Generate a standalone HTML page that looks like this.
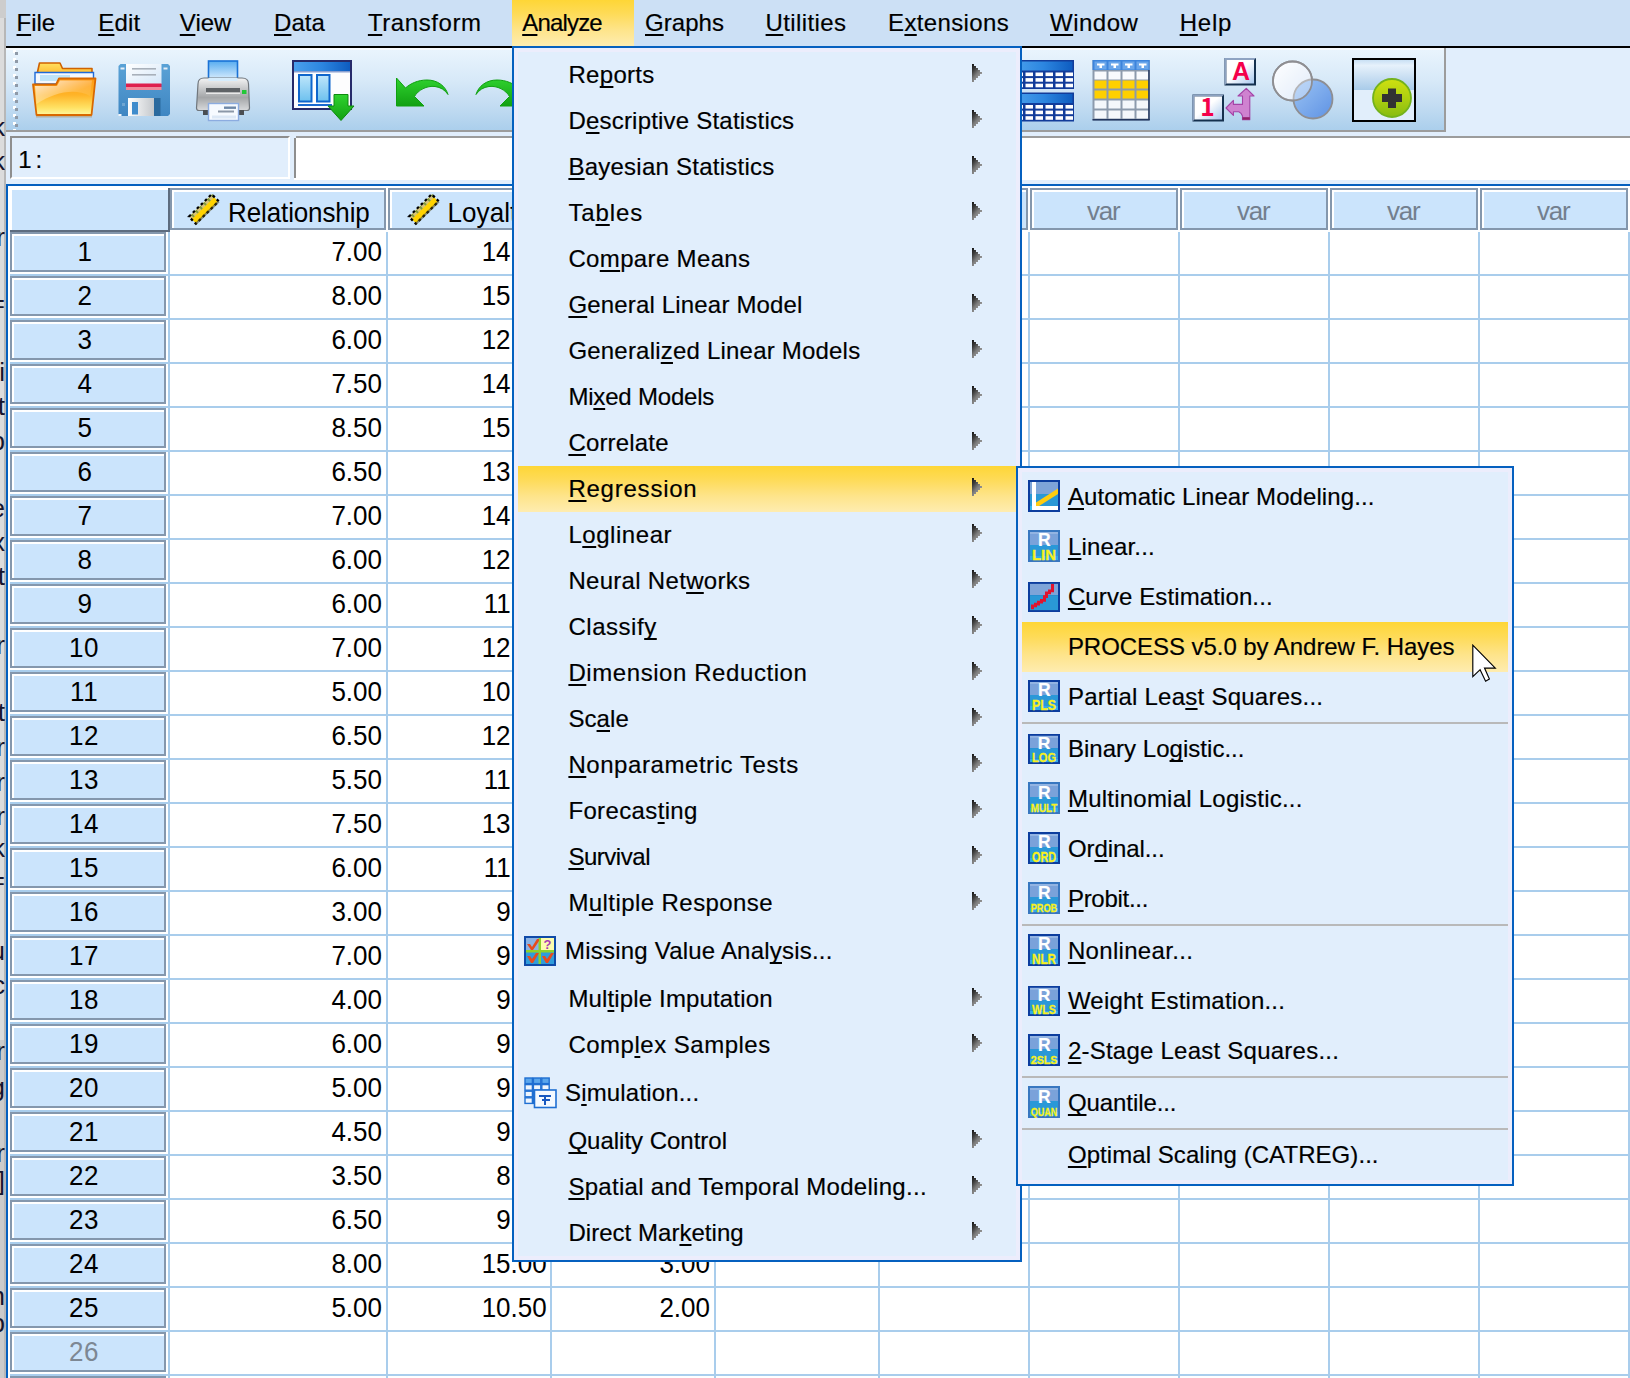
<!DOCTYPE html>
<html><head><meta charset="utf-8"><title>SPSS Analyze Regression PROCESS</title>
<style>
html,body{margin:0;padding:0}
body{width:1630px;height:1378px;overflow:hidden;position:relative;background:#fff;font-family:"Liberation Sans",sans-serif;}
.a{position:absolute}
.t{position:absolute;white-space:pre;font-family:"Liberation Sans",sans-serif;-webkit-text-stroke:0.18px currentColor}
.t u{text-decoration:underline;text-decoration-thickness:2px;text-underline-offset:3px;text-decoration-skip-ink:none}
.rh{position:absolute;left:10px;width:152px;height:36px;border:2px solid #8497ad;background:#cbe4fc;box-shadow:inset 2px 2px 0 #fff}
.ch{position:absolute;top:188px;height:38px;border:2px solid #8497ad;background:#cbe4fc;box-shadow:inset 2px 2px 0 #fff}
.hl{position:absolute;height:2px;background:#a9cdec;left:10px;right:0}
.vl{position:absolute;width:2px;background:#a9cdec;top:232px;bottom:0}
.sep{position:absolute;left:5px;width:486px;height:2px;background:#b9b9b9}
.arr{position:absolute;left:459px;width:10px;height:18px}
</style></head><body>

<div class="a" style="left:0;top:0;width:6px;height:1378px;background:linear-gradient(90deg,#dcdcdc 0,#dcdcdc 4px,#b7b7b7 4px,#b7b7b7 6px)"></div>
<div class="a" style="left:0;top:0;width:6px;height:18px;background:#cdcdcd"></div>
<div class="a" style="left:0;top:1040px;width:4px;height:338px;background:#cbcbcb"></div>
<div class="a" style="left:0;top:0;width:5px;height:1378px;overflow:hidden"><span style="position:absolute;right:0;top:112px;font-size:26px;line-height:30px;color:#15152e;white-space:pre">k</span><span style="position:absolute;right:0;top:146px;font-size:26px;line-height:30px;color:#15152e;white-space:pre">k</span><span style="position:absolute;right:0;top:222px;font-size:26px;line-height:30px;color:#15152e;white-space:pre">r</span><span style="position:absolute;right:0;top:288px;font-size:26px;line-height:30px;color:#15152e;white-space:pre">=</span><span style="position:absolute;right:0;top:357px;font-size:26px;line-height:30px;color:#15152e;white-space:pre">i</span><span style="position:absolute;right:0;top:391px;font-size:26px;line-height:30px;color:#15152e;white-space:pre">t</span><span style="position:absolute;right:0;top:426px;font-size:26px;line-height:30px;color:#15152e;white-space:pre">b</span><span style="position:absolute;right:0;top:493px;font-size:26px;line-height:30px;color:#15152e;white-space:pre">e</span><span style="position:absolute;right:0;top:527px;font-size:26px;line-height:30px;color:#15152e;white-space:pre">x</span><span style="position:absolute;right:0;top:561px;font-size:26px;line-height:30px;color:#15152e;white-space:pre">t</span><span style="position:absolute;right:0;top:630px;font-size:26px;line-height:30px;color:#15152e;white-space:pre">r</span><span style="position:absolute;right:0;top:697px;font-size:26px;line-height:30px;color:#15152e;white-space:pre">t</span><span style="position:absolute;right:0;top:732px;font-size:26px;line-height:30px;color:#15152e;white-space:pre">r</span><span style="position:absolute;right:0;top:767px;font-size:26px;line-height:30px;color:#15152e;white-space:pre">r</span><span style="position:absolute;right:0;top:801px;font-size:26px;line-height:30px;color:#15152e;white-space:pre">r</span><span style="position:absolute;right:0;top:833px;font-size:26px;line-height:30px;color:#15152e;white-space:pre">k</span><span style="position:absolute;right:0;top:865px;font-size:26px;line-height:30px;color:#15152e;white-space:pre">=</span><span style="position:absolute;right:0;top:936px;font-size:26px;line-height:30px;color:#15152e;white-space:pre">u</span><span style="position:absolute;right:0;top:970px;font-size:26px;line-height:30px;color:#15152e;white-space:pre">c</span><span style="position:absolute;right:0;top:1036px;font-size:26px;line-height:30px;color:#15152e;white-space:pre">r</span><span style="position:absolute;right:0;top:1072px;font-size:26px;line-height:30px;color:#15152e;white-space:pre">g</span><span style="position:absolute;right:0;top:1138px;font-size:26px;line-height:30px;color:#15152e;white-space:pre">r</span><span style="position:absolute;right:0;top:1166px;font-size:26px;line-height:30px;color:#15152e;white-space:pre">]</span><span style="position:absolute;right:0;top:1281px;font-size:26px;line-height:30px;color:#15152e;white-space:pre">h</span><span style="position:absolute;right:0;top:1308px;font-size:26px;line-height:30px;color:#15152e;white-space:pre">b</span></div>
<div class="a" style="left:6px;top:0;width:1624px;height:46px;background:#cce0f5"></div>
<div class="a" style="left:512px;top:0;width:122px;height:46px;background:linear-gradient(180deg,#fed636 0%,#fedb58 30%,#fee48a 65%,#feecb0 100%)"></div>
<div class="a" style="left:6px;top:46px;width:1624px;height:2px;background:#000"></div>
<span class="t " style="left:16.50px;top:9px;font-size:24px;line-height:27px;letter-spacing:-0.042px;color:#000;"><u>F</u>ile</span>
<span class="t " style="left:98.20px;top:9px;font-size:24px;line-height:27px;letter-spacing:0.208px;color:#000;"><u>E</u>dit</span>
<span class="t " style="left:179.80px;top:9px;font-size:24px;line-height:27px;letter-spacing:0.017px;color:#000;"><u>V</u>iew</span>
<span class="t " style="left:274.00px;top:9px;font-size:24px;line-height:27px;letter-spacing:0.083px;color:#000;"><u>D</u>ata</span>
<span class="t " style="left:367.90px;top:9px;font-size:24px;line-height:27px;letter-spacing:0.575px;color:#000;"><u>T</u>ransform</span>
<span class="t " style="left:522.20px;top:9px;font-size:24px;line-height:27px;letter-spacing:-0.812px;color:#000;"><u>A</u>nalyze</span>
<span class="t " style="left:645.00px;top:9px;font-size:24px;line-height:27px;letter-spacing:0.050px;color:#000;"><u>G</u>raphs</span>
<span class="t " style="left:765.60px;top:9px;font-size:24px;line-height:27px;letter-spacing:0.378px;color:#000;"><u>U</u>tilities</span>
<span class="t " style="left:888.00px;top:9px;font-size:24px;line-height:27px;letter-spacing:0.369px;color:#000;">E<u>x</u>tensions</span>
<span class="t " style="left:1050.00px;top:9px;font-size:24px;line-height:27px;letter-spacing:0.500px;color:#000;"><u>W</u>indow</span>
<span class="t " style="left:1179.70px;top:9px;font-size:24px;line-height:27px;letter-spacing:0.808px;color:#000;"><u>H</u>elp</span>
<div class="a" style="left:6px;top:48px;width:1624px;height:136px;background:#e1eefc"></div>
<div class="a" style="left:6px;top:48px;width:1438px;height:82px;background:linear-gradient(180deg,#f6fafe 0,#f6fafe 2px,#e9f4fd 2px,#d7e9f8 40%,#c3dcf2 70%,#abcfec 100%);border-right:2px solid #9c9c9c;border-bottom:2px solid #9c9c9c"></div>
<svg class="a" style="left:0;top:48px" width="1630" height="84" viewBox="0 48 1630 84"><defs>
<linearGradient id="fBack" x1="0" y1="0" x2="0" y2="1"><stop offset="0" stop-color="#ffe060"/><stop offset="1" stop-color="#ffa818"/></linearGradient>
<linearGradient id="fFront" x1="0" y1="0" x2="0" y2="1"><stop offset="0" stop-color="#ff9a14"/><stop offset="0.45" stop-color="#ffb428"/><stop offset="0.8" stop-color="#ffe264"/><stop offset="1" stop-color="#fff7a0"/></linearGradient>
<linearGradient id="fShine" x1="0" y1="0" x2="1" y2="1"><stop offset="0" stop-color="#fff" stop-opacity="0.85"/><stop offset="0.6" stop-color="#fff" stop-opacity="0.15"/><stop offset="1" stop-color="#fff" stop-opacity="0"/></linearGradient>
<linearGradient id="flBody" x1="0" y1="0" x2="0" y2="1"><stop offset="0" stop-color="#5aa2d6"/><stop offset="1" stop-color="#3f86c2"/></linearGradient>
<linearGradient id="flLab" x1="0" y1="0" x2="1" y2="1"><stop offset="0" stop-color="#ffffff"/><stop offset="1" stop-color="#d4e6f8"/></linearGradient>
<linearGradient id="flMet" x1="0" y1="0" x2="1" y2="0"><stop offset="0" stop-color="#ffffff"/><stop offset="1" stop-color="#c4c8cc"/></linearGradient>
<linearGradient id="prPap" x1="0" y1="0" x2="0" y2="1"><stop offset="0" stop-color="#58acf0"/><stop offset="1" stop-color="#e4f2fe"/></linearGradient>
<linearGradient id="prBody" x1="0" y1="0" x2="0" y2="1"><stop offset="0" stop-color="#f4f4f4"/><stop offset="0.35" stop-color="#c4c6c8"/><stop offset="0.6" stop-color="#a4a6a8"/><stop offset="1" stop-color="#d8dadc"/></linearGradient>
<linearGradient id="hdr" x1="0" y1="0" x2="1" y2="0"><stop offset="0" stop-color="#4aa0ec"/><stop offset="0.5" stop-color="#2c86e0"/><stop offset="1" stop-color="#0e5cc0"/></linearGradient>
<linearGradient id="pan" x1="0" y1="0" x2="0" y2="1"><stop offset="0" stop-color="#bfe6fb"/><stop offset="1" stop-color="#6cc0ee"/></linearGradient>
<linearGradient id="grn" x1="0" y1="0" x2="0" y2="1"><stop offset="0" stop-color="#2fd22f"/><stop offset="1" stop-color="#12a012"/></linearGradient>
<linearGradient id="box" x1="0" y1="0" x2="1" y2="1"><stop offset="0" stop-color="#ffffff"/><stop offset="0.45" stop-color="#ffffff"/><stop offset="1" stop-color="#a8c8ee"/></linearGradient>
<linearGradient id="c1" x1="0" y1="0" x2="1" y2="1"><stop offset="0" stop-color="#ffffff"/><stop offset="1" stop-color="#cfe0f6"/></linearGradient>
<linearGradient id="c2" x1="0" y1="0" x2="1" y2="1"><stop offset="0" stop-color="#9cc4f4"/><stop offset="1" stop-color="#5e92e4"/></linearGradient>
<linearGradient id="btn" x1="0" y1="0" x2="0" y2="1"><stop offset="0" stop-color="#c9e0f4"/><stop offset="0.18" stop-color="#e6f1fb"/><stop offset="1" stop-color="#a9cbe9"/></linearGradient>
<linearGradient id="lime" x1="0" y1="0" x2="0" y2="1"><stop offset="0" stop-color="#cfe010"/><stop offset="0.5" stop-color="#aed010"/><stop offset="1" stop-color="#86bc10"/></linearGradient>
</defs><path d="M37.5 72 L39.5 63 L60 63 L62.5 68.5 L92 68.5 L92 80 L37.5 80 Z" fill="url(#fBack)" stroke="#cf6200" stroke-width="1.6" stroke-linejoin="round"/><path d="M35 72.5 L93.5 72.5 L93.5 84 L35 84 Z" fill="#f4f8fe" stroke="#1f6ad8" stroke-width="1.4"/><path d="M40 75 L70 75 L70 81 L40 81 Z" fill="#bfe4f8"/><path d="M33 84.5 L56 84.5 L59 78.5 L95.5 78.5 L91.5 115 L36.5 115 Z" fill="url(#fFront)" stroke="#d96800" stroke-width="1.8" stroke-linejoin="round"/><path d="M35 86 L57 86 L60 80.5 L92 80.5 L90 96 C75 88 55 92 36.5 104 Z" fill="url(#fShine)"/><rect x="36" y="116" width="56" height="1.5" fill="#b8966a" opacity="0.6"/><path d="M118.5 66 L120.5 64 L168 64 L170 66 L170 114 L168 116 L120.5 116 L118.5 114 Z" fill="url(#flBody)"/><rect x="126" y="64" width="35.5" height="20" fill="url(#flLab)"/><rect x="132" y="68" width="24" height="1.6" fill="#a8b0ba"/><rect x="132" y="74" width="24" height="1.6" fill="#a8b0ba"/><rect x="126" y="83.5" width="35.5" height="3.6" fill="#de1f4e"/><rect x="126" y="87" width="35.5" height="3" fill="#f08a9c"/><rect x="128" y="98" width="26" height="18" fill="url(#flMet)"/><rect x="154" y="98" width="6.5" height="18" fill="#2b6a9e"/><rect x="132" y="102" width="6" height="12.5" fill="#3f8ccc"/><rect x="120.5" y="67.5" width="4" height="2" fill="#e6eef6"/><rect x="163.5" y="67.5" width="4" height="2" fill="#e6eef6"/><rect x="122" y="103" width="3" height="3" fill="#6fa6d2"/><rect x="118.5" y="114" width="3" height="2" fill="#f2f6fa"/><rect x="208.5" y="61" width="29" height="20" fill="url(#prPap)" stroke="#1a72d6" stroke-width="1.6"/><path d="M198 84 Q198 78 204 78 L242 78 Q248.5 78 248.5 84 L249.5 108 Q249.5 110.5 247 110.5 L199 110.5 Q196.5 110.5 196.5 108 Z" fill="url(#prBody)" stroke="#70767c" stroke-width="1.2"/><rect x="208.5" y="78" width="29" height="3" fill="#d6ecfc"/><rect x="206" y="88" width="34" height="4.5" fill="#5e6266"/><rect x="206" y="92.5" width="34" height="1.5" fill="#e8e8e8"/><rect x="242" y="90" width="4.5" height="4" fill="#22c838"/><rect x="203" y="110" width="6" height="5" fill="#4a4e52"/><rect x="238" y="110" width="6" height="5" fill="#4a4e52"/><rect x="208.5" y="103.5" width="30" height="17" fill="#f6faff" stroke="#8cace0" stroke-width="1.4"/><rect x="224" y="106.5" width="12" height="2.4" fill="#6e88a8"/><rect x="218" y="110.5" width="16" height="2" fill="#8c98a8"/><rect x="212" y="115.5" width="24" height="3" fill="#dce8f6"/><rect x="293" y="61" width="58" height="48" fill="#fdfdfe" stroke="#262a6a" stroke-width="2"/><rect x="294" y="62" width="56" height="9" fill="url(#hdr)"/><rect x="294" y="71" width="56" height="1.5" fill="#8aa0d0"/><rect x="299" y="75" width="12.5" height="26.5" fill="url(#pan)" stroke="#0f66cc" stroke-width="2"/><rect x="317" y="75" width="12.5" height="26.5" fill="url(#pan)" stroke="#0f66cc" stroke-width="2"/><rect x="298" y="104" width="34" height="2" fill="#1a6ad0"/><path d="M334 94.5 L348 94.5 L348 106 L354 106 L341 120.5 L328 106 L334 106 Z" fill="url(#grn)" stroke="#0e8a0e" stroke-width="1"/><path d="M396.5 78 L396.5 106 L424 106 L414.5 96.5 C418 90 427 85.5 435 86.5 C440.5 87.2 445 90 448 94.5 C445.5 86 437.5 80 427 80 C418 80 410.5 83.5 405.5 88 Z" fill="url(#grn)" stroke="#10a010" stroke-width="1" stroke-linejoin="round"/><g transform="translate(924,0) scale(-1,1)"><path d="M396.5 78 L396.5 106 L424 106 L414.5 96.5 C418 90 427 85.5 435 86.5 C440.5 87.2 445 90 448 94.5 C445.5 86 437.5 80 427 80 C418 80 410.5 83.5 405.5 88 Z" fill="url(#grn)" stroke="#10a010" stroke-width="1" stroke-linejoin="round"/></g><rect x="1013" y="60" width="61" height="29" fill="#123c9a"/><rect x="1014.5" y="61.5" width="58" height="9" fill="url(#hdr)"/><rect x="1015.5" y="72.5" width="7.5" height="3.6" fill="#fff"/><rect x="1025.5" y="72.5" width="7.5" height="3.6" fill="#fff"/><rect x="1035.5" y="72.5" width="7.5" height="3.6" fill="#fff"/><rect x="1045.5" y="72.5" width="7.5" height="3.6" fill="#fff"/><rect x="1055.5" y="72.5" width="7.5" height="3.6" fill="#fff"/><rect x="1065.5" y="72.5" width="7.5" height="3.6" fill="#fff"/><rect x="1015.5" y="78.1" width="7.5" height="3.6" fill="#fff"/><rect x="1025.5" y="78.1" width="7.5" height="3.6" fill="#fff"/><rect x="1035.5" y="78.1" width="7.5" height="3.6" fill="#fff"/><rect x="1045.5" y="78.1" width="7.5" height="3.6" fill="#fff"/><rect x="1055.5" y="78.1" width="7.5" height="3.6" fill="#fff"/><rect x="1065.5" y="78.1" width="7.5" height="3.6" fill="#fff"/><rect x="1015.5" y="83.7" width="7.5" height="3.6" fill="#fff"/><rect x="1025.5" y="83.7" width="7.5" height="3.6" fill="#fff"/><rect x="1035.5" y="83.7" width="7.5" height="3.6" fill="#fff"/><rect x="1045.5" y="83.7" width="7.5" height="3.6" fill="#fff"/><rect x="1055.5" y="83.7" width="7.5" height="3.6" fill="#fff"/><rect x="1065.5" y="83.7" width="7.5" height="3.6" fill="#fff"/><rect x="1013" y="92.5" width="61" height="29" fill="#123c9a"/><rect x="1014.5" y="94.0" width="58" height="9" fill="url(#hdr)"/><rect x="1015.5" y="105.0" width="7.5" height="3.6" fill="#fff"/><rect x="1025.5" y="105.0" width="7.5" height="3.6" fill="#fff"/><rect x="1035.5" y="105.0" width="7.5" height="3.6" fill="#fff"/><rect x="1045.5" y="105.0" width="7.5" height="3.6" fill="#fff"/><rect x="1055.5" y="105.0" width="7.5" height="3.6" fill="#fff"/><rect x="1065.5" y="105.0" width="7.5" height="3.6" fill="#fff"/><rect x="1015.5" y="110.6" width="7.5" height="3.6" fill="#fff"/><rect x="1025.5" y="110.6" width="7.5" height="3.6" fill="#fff"/><rect x="1035.5" y="110.6" width="7.5" height="3.6" fill="#fff"/><rect x="1045.5" y="110.6" width="7.5" height="3.6" fill="#fff"/><rect x="1055.5" y="110.6" width="7.5" height="3.6" fill="#fff"/><rect x="1065.5" y="110.6" width="7.5" height="3.6" fill="#fff"/><rect x="1015.5" y="116.2" width="7.5" height="3.6" fill="#fff"/><rect x="1025.5" y="116.2" width="7.5" height="3.6" fill="#fff"/><rect x="1035.5" y="116.2" width="7.5" height="3.6" fill="#fff"/><rect x="1045.5" y="116.2" width="7.5" height="3.6" fill="#fff"/><rect x="1055.5" y="116.2" width="7.5" height="3.6" fill="#fff"/><rect x="1065.5" y="116.2" width="7.5" height="3.6" fill="#fff"/><rect x="1092.5" y="60" width="57.2" height="60" fill="#8c9aac"/><rect x="1092.5" y="60" width="57.2" height="10" fill="#3c84dc"/><rect x="1094.5" y="61.5" width="12" height="8" fill="#6aa6ea"/><path d="M1097.0 63.5 h7.5 v2 h-2.5 v2.5 h-2.5 v-2.5 h-2.5 Z" fill="#fff"/><rect x="1094.5" y="71.5" width="12" height="8" fill="#f8fafd"/><rect x="1094.5" y="80.5" width="12" height="8" fill="#ffd000"/><rect x="1094.5" y="90.5" width="12" height="8" fill="#ffd000"/><rect x="1094.5" y="100.5" width="12" height="8" fill="#f4f7fb"/><rect x="1094.5" y="110.5" width="12" height="8" fill="#f4f7fb"/><rect x="1108.5" y="61.5" width="12" height="8" fill="#6aa6ea"/><path d="M1111.0 63.5 h7.5 v2 h-2.5 v2.5 h-2.5 v-2.5 h-2.5 Z" fill="#fff"/><rect x="1108.5" y="71.5" width="12" height="8" fill="#f8fafd"/><rect x="1108.5" y="80.5" width="12" height="8" fill="#ffd000"/><rect x="1108.5" y="90.5" width="12" height="8" fill="#ffd000"/><rect x="1108.5" y="100.5" width="12" height="8" fill="#f4f7fb"/><rect x="1108.5" y="110.5" width="12" height="8" fill="#f4f7fb"/><rect x="1122.5" y="61.5" width="12" height="8" fill="#6aa6ea"/><path d="M1125.0 63.5 h7.5 v2 h-2.5 v2.5 h-2.5 v-2.5 h-2.5 Z" fill="#fff"/><rect x="1122.5" y="71.5" width="12" height="8" fill="#f8fafd"/><rect x="1122.5" y="80.5" width="12" height="8" fill="#ffd000"/><rect x="1122.5" y="90.5" width="12" height="8" fill="#ffd000"/><rect x="1122.5" y="100.5" width="12" height="8" fill="#f4f7fb"/><rect x="1122.5" y="110.5" width="12" height="8" fill="#f4f7fb"/><rect x="1136.5" y="61.5" width="12" height="8" fill="#6aa6ea"/><path d="M1139.0 63.5 h7.5 v2 h-2.5 v2.5 h-2.5 v-2.5 h-2.5 Z" fill="#fff"/><rect x="1136.5" y="71.5" width="12" height="8" fill="#f8fafd"/><rect x="1136.5" y="80.5" width="12" height="8" fill="#ffd000"/><rect x="1136.5" y="90.5" width="12" height="8" fill="#ffd000"/><rect x="1136.5" y="100.5" width="12" height="8" fill="#f4f7fb"/><rect x="1136.5" y="110.5" width="12" height="8" fill="#f4f7fb"/><rect x="1092.5" y="119" width="57.2" height="1.6" fill="#22365e"/><rect x="1148.2" y="70" width="1.5" height="50" fill="#22365e"/><rect x="1224.5" y="58" width="31.5" height="27.5" fill="#15304e"/><path d="M1224.5 58 H1256.0 L1254.0 60 H1226.5 V83.5 L1224.5 85.5 Z" fill="#8ea3c2"/><rect x="1226.5" y="60" width="27.5" height="23.5" fill="url(#box)"/><text x="1241" y="80" text-anchor="middle" font-family="Liberation Sans,sans-serif" font-weight="bold" font-size="25" fill="#f4004a">A</text><rect x="1192.5" y="94.5" width="31.5" height="27" fill="#15304e"/><path d="M1192.5 94.5 H1224.0 L1222.0 96.5 H1194.5 V119.5 L1192.5 121.5 Z" fill="#8ea3c2"/><rect x="1194.5" y="96.5" width="27.5" height="23" fill="url(#box)"/><text x="1207.5" y="116" text-anchor="middle" font-family="Noto Sans CJK SC,Liberation Sans,sans-serif" font-weight="bold" font-size="24.5" fill="#f4004a">1</text><path d="M1246.3 88.3 L1254 96 L1249.8 96 L1249.8 119.7 L1242.5 119.7 L1242.5 116 C1241.8 113.8 1240.6 112.4 1238.8 111.7 L1233.4 111.7 L1233.4 115.4 L1226 108 L1233.4 100.4 L1233.4 104.4 L1242.5 104.4 L1242.5 96 L1238 96 Z" fill="#cf82d0" stroke="#a443a6" stroke-width="1.1" stroke-linejoin="round"/><rect x="1242.5" y="117.2" width="7.3" height="2.5" fill="#92206a"/><circle cx="1292.5" cy="81" r="19.5" fill="url(#c1)" stroke="#8e8e92" stroke-width="1.8"/><circle cx="1313" cy="99" r="19.5" fill="url(#c2)" stroke="#8e8e92" stroke-width="1.8"/><circle cx="1292.5" cy="81" r="19.5" fill="#ffffff" fill-opacity="0.35" stroke="#8e8e92" stroke-width="1.8"/><rect x="1353" y="59" width="62" height="62" fill="#e1eefb" stroke="#000" stroke-width="2"/><rect x="1354" y="60" width="60" height="30" fill="url(#btn)"/><circle cx="1392" cy="98" r="19" fill="url(#lime)" stroke="#74b21c" stroke-width="1.8"/><path d="M1388 88.5 h8 v5.5 h6 v8 h-6 v6 h-8 v-6 h-6 v-8 h6 Z" fill="#323232"/></svg>
<svg class="a" style="left:0;top:0" width="30" height="132"><rect x="13" y="50" width="3" height="3" fill="#fff"/><rect x="15" y="52" width="3" height="3" fill="#8f9aa8"/><rect x="13" y="58" width="3" height="3" fill="#fff"/><rect x="15" y="60" width="3" height="3" fill="#8f9aa8"/><rect x="13" y="66" width="3" height="3" fill="#fff"/><rect x="15" y="68" width="3" height="3" fill="#8f9aa8"/><rect x="13" y="74" width="3" height="3" fill="#fff"/><rect x="15" y="76" width="3" height="3" fill="#8f9aa8"/><rect x="13" y="82" width="3" height="3" fill="#fff"/><rect x="15" y="84" width="3" height="3" fill="#8f9aa8"/><rect x="13" y="90" width="3" height="3" fill="#fff"/><rect x="15" y="92" width="3" height="3" fill="#8f9aa8"/><rect x="13" y="98" width="3" height="3" fill="#fff"/><rect x="15" y="100" width="3" height="3" fill="#8f9aa8"/><rect x="13" y="106" width="3" height="3" fill="#fff"/><rect x="15" y="108" width="3" height="3" fill="#8f9aa8"/><rect x="13" y="114" width="3" height="3" fill="#fff"/><rect x="15" y="116" width="3" height="3" fill="#8f9aa8"/><rect x="13" y="122" width="3" height="3" fill="#fff"/><rect x="15" y="124" width="3" height="3" fill="#8f9aa8"/><rect x="13" y="129" width="3" height="1" fill="#fff"/></svg>
<div class="a" style="left:6px;top:136px;width:1624px;height:2px;background:#9c9c9c"></div>
<div class="a" style="left:6px;top:132px;width:290px;height:6px;background:#e1eefc"></div>
<div class="a" style="left:10px;top:136px;width:276px;height:39px;background:#e1eefc;border:2px solid;border-color:#8e8e8e #fff #fff #8e8e8e"></div>
<div class="a" style="left:294px;top:138px;width:1336px;height:42px;background:#fff;border-left:2px solid #8e8e8e"></div>
<div class="a" style="left:294px;top:178px;width:1336px;height:2px;background:#fff"></div>
<span class="t " style="left:18.20px;top:146px;font-size:24px;line-height:27px;letter-spacing:-1.412px;color:#000;">1 :</span>
<div class="a" style="left:6px;top:184px;width:1624px;height:2px;background:#0560bf"></div>
<div class="a" style="left:6px;top:184px;width:2px;height:1194px;background:#0560bf"></div>
<div class="vl" style="left:168px"></div>
<div class="vl" style="left:386px"></div>
<div class="vl" style="left:550px"></div>
<div class="vl" style="left:714px"></div>
<div class="vl" style="left:878px"></div>
<div class="vl" style="left:1028px"></div>
<div class="vl" style="left:1178px"></div>
<div class="vl" style="left:1328px"></div>
<div class="vl" style="left:1478px"></div>
<div class="vl" style="left:1628px"></div>
<div class="hl" style="top:274px"></div>
<div class="hl" style="top:318px"></div>
<div class="hl" style="top:362px"></div>
<div class="hl" style="top:406px"></div>
<div class="hl" style="top:450px"></div>
<div class="hl" style="top:494px"></div>
<div class="hl" style="top:538px"></div>
<div class="hl" style="top:582px"></div>
<div class="hl" style="top:626px"></div>
<div class="hl" style="top:670px"></div>
<div class="hl" style="top:714px"></div>
<div class="hl" style="top:758px"></div>
<div class="hl" style="top:802px"></div>
<div class="hl" style="top:846px"></div>
<div class="hl" style="top:890px"></div>
<div class="hl" style="top:934px"></div>
<div class="hl" style="top:978px"></div>
<div class="hl" style="top:1022px"></div>
<div class="hl" style="top:1066px"></div>
<div class="hl" style="top:1110px"></div>
<div class="hl" style="top:1154px"></div>
<div class="hl" style="top:1198px"></div>
<div class="hl" style="top:1242px"></div>
<div class="hl" style="top:1286px"></div>
<div class="hl" style="top:1330px"></div>
<div class="hl" style="top:1374px"></div>
<div class="a" style="left:10px;top:188px;width:158px;height:42px;background:#cbe4fc;border-right:2px solid #5d6c7f;border-bottom:2px solid #5d6c7f;box-shadow:inset 2px 2px 0 #fff"></div>
<div class="ch" style="left:170px;width:212px"></div>
<div class="ch" style="left:388px;width:158px"></div>
<div class="ch" style="left:552px;width:158px"></div>
<div class="ch" style="left:716px;width:158px"></div>
<div class="ch" style="left:880px;width:144px"></div>
<div class="ch" style="left:1030px;width:144px"></div>
<div class="ch" style="left:1180px;width:144px"></div>
<div class="ch" style="left:1330px;width:144px"></div>
<div class="ch" style="left:1480px;width:144px"></div>
<svg class="a" style="left:186px;top:192px" width="36" height="34" viewBox="186 192 36 34"><g transform="translate(203.8,209) rotate(-44.5)"><rect x="-15.6" y="-4.6" width="31.2" height="9.2" fill="#ffd200"/><rect x="-15.6" y="-4.6" width="31.2" height="3.4" fill="#d6c27a"/><rect x="-13.4" y="-4.6" width="2" height="3.4" fill="#7f9a3c"/><rect x="-7.8" y="-4.6" width="2" height="3.4" fill="#7f9a3c"/><rect x="-2.2" y="-4.6" width="2" height="3.4" fill="#7f9a3c"/><rect x="3.4" y="-4.6" width="2" height="3.4" fill="#7f9a3c"/><rect x="9.0" y="-4.6" width="2" height="3.4" fill="#7f9a3c"/><rect x="14.6" y="-4.6" width="2" height="3.4" fill="#7f9a3c"/><rect x="-16" y="-5" width="32" height="10" fill="none" stroke="#000" stroke-width="2.2" stroke-dasharray="2.8 2.8"/><rect x="-16" y="3.9" width="32" height="2.2" fill="#4a4410" opacity="0.55"/></g></svg>
<svg class="a" style="left:406px;top:192px" width="36" height="34" viewBox="406 192 36 34"><g transform="translate(423.8,209) rotate(-44.5)"><rect x="-15.6" y="-4.6" width="31.2" height="9.2" fill="#ffd200"/><rect x="-15.6" y="-4.6" width="31.2" height="3.4" fill="#d6c27a"/><rect x="-13.4" y="-4.6" width="2" height="3.4" fill="#7f9a3c"/><rect x="-7.8" y="-4.6" width="2" height="3.4" fill="#7f9a3c"/><rect x="-2.2" y="-4.6" width="2" height="3.4" fill="#7f9a3c"/><rect x="3.4" y="-4.6" width="2" height="3.4" fill="#7f9a3c"/><rect x="9.0" y="-4.6" width="2" height="3.4" fill="#7f9a3c"/><rect x="14.6" y="-4.6" width="2" height="3.4" fill="#7f9a3c"/><rect x="-16" y="-5" width="32" height="10" fill="none" stroke="#000" stroke-width="2.2" stroke-dasharray="2.8 2.8"/><rect x="-16" y="3.9" width="32" height="2.2" fill="#4a4410" opacity="0.55"/></g></svg>
<span class="t " style="left:228.10px;top:197.5px;font-size:26px;line-height:30px;letter-spacing:-0.130px;color:#000;transform:scaleY(1.045);transform-origin:0 24px;-webkit-text-stroke:0;">Relationship</span>
<span class="t " style="left:447.60px;top:197.5px;font-size:26px;line-height:30px;letter-spacing:0.000px;color:#000;transform:scaleY(1.045);transform-origin:0 24px;-webkit-text-stroke:0;letter-spacing:0.05px;">Loyalty</span>
<span class="t " style="left:1087.00px;top:196px;font-size:26px;line-height:30px;letter-spacing:-1.263px;color:#737f8e;transform:scaleY(1.0);transform-origin:0 24px;-webkit-text-stroke:0;-webkit-text-stroke:0;">var</span>
<span class="t " style="left:1237.00px;top:196px;font-size:26px;line-height:30px;letter-spacing:-1.263px;color:#737f8e;transform:scaleY(1.0);transform-origin:0 24px;-webkit-text-stroke:0;-webkit-text-stroke:0;">var</span>
<span class="t " style="left:1387.00px;top:196px;font-size:26px;line-height:30px;letter-spacing:-1.263px;color:#737f8e;transform:scaleY(1.0);transform-origin:0 24px;-webkit-text-stroke:0;-webkit-text-stroke:0;">var</span>
<span class="t " style="left:1537.00px;top:196px;font-size:26px;line-height:30px;letter-spacing:-1.263px;color:#737f8e;transform:scaleY(1.0);transform-origin:0 24px;-webkit-text-stroke:0;-webkit-text-stroke:0;">var</span>
<div class="rh" style="top:232px"></div>
<span class="t " style="left:77.55px;top:237px;font-size:26px;line-height:30px;letter-spacing:0.000px;color:#000;transform:scaleY(1.045);transform-origin:0 24px;-webkit-text-stroke:0;">1</span>
<span class="t " style="left:331.38px;top:237px;font-size:26px;line-height:30px;letter-spacing:0.000px;color:#000;transform:scaleY(1.045);transform-origin:0 24px;-webkit-text-stroke:0;">7.00</span>
<span class="t " style="left:481.67px;top:237px;font-size:26px;line-height:30px;letter-spacing:0.000px;color:#000;transform:scaleY(1.045);transform-origin:0 24px;-webkit-text-stroke:0;">14.00</span>
<span class="t " style="left:659.38px;top:237px;font-size:26px;line-height:30px;letter-spacing:0.000px;color:#000;transform:scaleY(1.045);transform-origin:0 24px;-webkit-text-stroke:0;">4.00</span>
<div class="rh" style="top:276px"></div>
<span class="t " style="left:77.55px;top:281px;font-size:26px;line-height:30px;letter-spacing:0.000px;color:#000;transform:scaleY(1.045);transform-origin:0 24px;-webkit-text-stroke:0;">2</span>
<span class="t " style="left:331.38px;top:281px;font-size:26px;line-height:30px;letter-spacing:0.000px;color:#000;transform:scaleY(1.045);transform-origin:0 24px;-webkit-text-stroke:0;">8.00</span>
<span class="t " style="left:481.67px;top:281px;font-size:26px;line-height:30px;letter-spacing:0.000px;color:#000;transform:scaleY(1.045);transform-origin:0 24px;-webkit-text-stroke:0;">15.00</span>
<span class="t " style="left:659.38px;top:281px;font-size:26px;line-height:30px;letter-spacing:0.000px;color:#000;transform:scaleY(1.045);transform-origin:0 24px;-webkit-text-stroke:0;">5.00</span>
<div class="rh" style="top:320px"></div>
<span class="t " style="left:77.55px;top:325px;font-size:26px;line-height:30px;letter-spacing:0.000px;color:#000;transform:scaleY(1.045);transform-origin:0 24px;-webkit-text-stroke:0;">3</span>
<span class="t " style="left:331.38px;top:325px;font-size:26px;line-height:30px;letter-spacing:0.000px;color:#000;transform:scaleY(1.045);transform-origin:0 24px;-webkit-text-stroke:0;">6.00</span>
<span class="t " style="left:481.67px;top:325px;font-size:26px;line-height:30px;letter-spacing:0.000px;color:#000;transform:scaleY(1.045);transform-origin:0 24px;-webkit-text-stroke:0;">12.00</span>
<span class="t " style="left:659.38px;top:325px;font-size:26px;line-height:30px;letter-spacing:0.000px;color:#000;transform:scaleY(1.045);transform-origin:0 24px;-webkit-text-stroke:0;">3.00</span>
<div class="rh" style="top:364px"></div>
<span class="t " style="left:77.55px;top:369px;font-size:26px;line-height:30px;letter-spacing:0.000px;color:#000;transform:scaleY(1.045);transform-origin:0 24px;-webkit-text-stroke:0;">4</span>
<span class="t " style="left:331.38px;top:369px;font-size:26px;line-height:30px;letter-spacing:0.000px;color:#000;transform:scaleY(1.045);transform-origin:0 24px;-webkit-text-stroke:0;">7.50</span>
<span class="t " style="left:481.67px;top:369px;font-size:26px;line-height:30px;letter-spacing:0.000px;color:#000;transform:scaleY(1.045);transform-origin:0 24px;-webkit-text-stroke:0;">14.50</span>
<span class="t " style="left:659.38px;top:369px;font-size:26px;line-height:30px;letter-spacing:0.000px;color:#000;transform:scaleY(1.045);transform-origin:0 24px;-webkit-text-stroke:0;">4.00</span>
<div class="rh" style="top:408px"></div>
<span class="t " style="left:77.55px;top:413px;font-size:26px;line-height:30px;letter-spacing:0.000px;color:#000;transform:scaleY(1.045);transform-origin:0 24px;-webkit-text-stroke:0;">5</span>
<span class="t " style="left:331.38px;top:413px;font-size:26px;line-height:30px;letter-spacing:0.000px;color:#000;transform:scaleY(1.045);transform-origin:0 24px;-webkit-text-stroke:0;">8.50</span>
<span class="t " style="left:481.67px;top:413px;font-size:26px;line-height:30px;letter-spacing:0.000px;color:#000;transform:scaleY(1.045);transform-origin:0 24px;-webkit-text-stroke:0;">15.50</span>
<span class="t " style="left:659.38px;top:413px;font-size:26px;line-height:30px;letter-spacing:0.000px;color:#000;transform:scaleY(1.045);transform-origin:0 24px;-webkit-text-stroke:0;">5.00</span>
<div class="rh" style="top:452px"></div>
<span class="t " style="left:77.55px;top:457px;font-size:26px;line-height:30px;letter-spacing:0.000px;color:#000;transform:scaleY(1.045);transform-origin:0 24px;-webkit-text-stroke:0;">6</span>
<span class="t " style="left:331.38px;top:457px;font-size:26px;line-height:30px;letter-spacing:0.000px;color:#000;transform:scaleY(1.045);transform-origin:0 24px;-webkit-text-stroke:0;">6.50</span>
<span class="t " style="left:481.67px;top:457px;font-size:26px;line-height:30px;letter-spacing:0.000px;color:#000;transform:scaleY(1.045);transform-origin:0 24px;-webkit-text-stroke:0;">13.00</span>
<span class="t " style="left:659.38px;top:457px;font-size:26px;line-height:30px;letter-spacing:0.000px;color:#000;transform:scaleY(1.045);transform-origin:0 24px;-webkit-text-stroke:0;">3.00</span>
<div class="rh" style="top:496px"></div>
<span class="t " style="left:77.55px;top:501px;font-size:26px;line-height:30px;letter-spacing:0.000px;color:#000;transform:scaleY(1.045);transform-origin:0 24px;-webkit-text-stroke:0;">7</span>
<span class="t " style="left:331.38px;top:501px;font-size:26px;line-height:30px;letter-spacing:0.000px;color:#000;transform:scaleY(1.045);transform-origin:0 24px;-webkit-text-stroke:0;">7.00</span>
<span class="t " style="left:481.67px;top:501px;font-size:26px;line-height:30px;letter-spacing:0.000px;color:#000;transform:scaleY(1.045);transform-origin:0 24px;-webkit-text-stroke:0;">14.00</span>
<span class="t " style="left:659.38px;top:501px;font-size:26px;line-height:30px;letter-spacing:0.000px;color:#000;transform:scaleY(1.045);transform-origin:0 24px;-webkit-text-stroke:0;">4.00</span>
<div class="rh" style="top:540px"></div>
<span class="t " style="left:77.55px;top:545px;font-size:26px;line-height:30px;letter-spacing:0.000px;color:#000;transform:scaleY(1.045);transform-origin:0 24px;-webkit-text-stroke:0;">8</span>
<span class="t " style="left:331.38px;top:545px;font-size:26px;line-height:30px;letter-spacing:0.000px;color:#000;transform:scaleY(1.045);transform-origin:0 24px;-webkit-text-stroke:0;">6.00</span>
<span class="t " style="left:481.67px;top:545px;font-size:26px;line-height:30px;letter-spacing:0.000px;color:#000;transform:scaleY(1.045);transform-origin:0 24px;-webkit-text-stroke:0;">12.00</span>
<span class="t " style="left:659.38px;top:545px;font-size:26px;line-height:30px;letter-spacing:0.000px;color:#000;transform:scaleY(1.045);transform-origin:0 24px;-webkit-text-stroke:0;">3.00</span>
<div class="rh" style="top:584px"></div>
<span class="t " style="left:77.55px;top:589px;font-size:26px;line-height:30px;letter-spacing:0.000px;color:#000;transform:scaleY(1.045);transform-origin:0 24px;-webkit-text-stroke:0;">9</span>
<span class="t " style="left:331.38px;top:589px;font-size:26px;line-height:30px;letter-spacing:0.000px;color:#000;transform:scaleY(1.045);transform-origin:0 24px;-webkit-text-stroke:0;">6.00</span>
<span class="t " style="left:483.67px;top:589px;font-size:26px;line-height:30px;letter-spacing:0.000px;color:#000;transform:scaleY(1.045);transform-origin:0 24px;-webkit-text-stroke:0;">11.50</span>
<span class="t " style="left:659.38px;top:589px;font-size:26px;line-height:30px;letter-spacing:0.000px;color:#000;transform:scaleY(1.045);transform-origin:0 24px;-webkit-text-stroke:0;">3.00</span>
<div class="rh" style="top:628px"></div>
<span class="t " style="left:69.06px;top:633px;font-size:26px;line-height:30px;letter-spacing:0.600px;color:#000;transform:scaleY(1.045);transform-origin:0 24px;-webkit-text-stroke:0;">10</span>
<span class="t " style="left:331.38px;top:633px;font-size:26px;line-height:30px;letter-spacing:0.000px;color:#000;transform:scaleY(1.045);transform-origin:0 24px;-webkit-text-stroke:0;">7.00</span>
<span class="t " style="left:481.67px;top:633px;font-size:26px;line-height:30px;letter-spacing:0.000px;color:#000;transform:scaleY(1.045);transform-origin:0 24px;-webkit-text-stroke:0;">12.50</span>
<span class="t " style="left:659.38px;top:633px;font-size:26px;line-height:30px;letter-spacing:0.000px;color:#000;transform:scaleY(1.045);transform-origin:0 24px;-webkit-text-stroke:0;">3.00</span>
<div class="rh" style="top:672px"></div>
<span class="t " style="left:70.00px;top:677px;font-size:26px;line-height:30px;letter-spacing:0.600px;color:#000;transform:scaleY(1.045);transform-origin:0 24px;-webkit-text-stroke:0;">11</span>
<span class="t " style="left:331.38px;top:677px;font-size:26px;line-height:30px;letter-spacing:0.000px;color:#000;transform:scaleY(1.045);transform-origin:0 24px;-webkit-text-stroke:0;">5.00</span>
<span class="t " style="left:481.67px;top:677px;font-size:26px;line-height:30px;letter-spacing:0.000px;color:#000;transform:scaleY(1.045);transform-origin:0 24px;-webkit-text-stroke:0;">10.00</span>
<span class="t " style="left:659.38px;top:677px;font-size:26px;line-height:30px;letter-spacing:0.000px;color:#000;transform:scaleY(1.045);transform-origin:0 24px;-webkit-text-stroke:0;">2.00</span>
<div class="rh" style="top:716px"></div>
<span class="t " style="left:69.06px;top:721px;font-size:26px;line-height:30px;letter-spacing:0.600px;color:#000;transform:scaleY(1.045);transform-origin:0 24px;-webkit-text-stroke:0;">12</span>
<span class="t " style="left:331.38px;top:721px;font-size:26px;line-height:30px;letter-spacing:0.000px;color:#000;transform:scaleY(1.045);transform-origin:0 24px;-webkit-text-stroke:0;">6.50</span>
<span class="t " style="left:481.67px;top:721px;font-size:26px;line-height:30px;letter-spacing:0.000px;color:#000;transform:scaleY(1.045);transform-origin:0 24px;-webkit-text-stroke:0;">12.00</span>
<span class="t " style="left:659.38px;top:721px;font-size:26px;line-height:30px;letter-spacing:0.000px;color:#000;transform:scaleY(1.045);transform-origin:0 24px;-webkit-text-stroke:0;">3.00</span>
<div class="rh" style="top:760px"></div>
<span class="t " style="left:69.06px;top:765px;font-size:26px;line-height:30px;letter-spacing:0.600px;color:#000;transform:scaleY(1.045);transform-origin:0 24px;-webkit-text-stroke:0;">13</span>
<span class="t " style="left:331.38px;top:765px;font-size:26px;line-height:30px;letter-spacing:0.000px;color:#000;transform:scaleY(1.045);transform-origin:0 24px;-webkit-text-stroke:0;">5.50</span>
<span class="t " style="left:483.67px;top:765px;font-size:26px;line-height:30px;letter-spacing:0.000px;color:#000;transform:scaleY(1.045);transform-origin:0 24px;-webkit-text-stroke:0;">11.00</span>
<span class="t " style="left:659.38px;top:765px;font-size:26px;line-height:30px;letter-spacing:0.000px;color:#000;transform:scaleY(1.045);transform-origin:0 24px;-webkit-text-stroke:0;">3.00</span>
<div class="rh" style="top:804px"></div>
<span class="t " style="left:69.06px;top:809px;font-size:26px;line-height:30px;letter-spacing:0.600px;color:#000;transform:scaleY(1.045);transform-origin:0 24px;-webkit-text-stroke:0;">14</span>
<span class="t " style="left:331.38px;top:809px;font-size:26px;line-height:30px;letter-spacing:0.000px;color:#000;transform:scaleY(1.045);transform-origin:0 24px;-webkit-text-stroke:0;">7.50</span>
<span class="t " style="left:481.67px;top:809px;font-size:26px;line-height:30px;letter-spacing:0.000px;color:#000;transform:scaleY(1.045);transform-origin:0 24px;-webkit-text-stroke:0;">13.50</span>
<span class="t " style="left:659.38px;top:809px;font-size:26px;line-height:30px;letter-spacing:0.000px;color:#000;transform:scaleY(1.045);transform-origin:0 24px;-webkit-text-stroke:0;">4.00</span>
<div class="rh" style="top:848px"></div>
<span class="t " style="left:69.06px;top:853px;font-size:26px;line-height:30px;letter-spacing:0.600px;color:#000;transform:scaleY(1.045);transform-origin:0 24px;-webkit-text-stroke:0;">15</span>
<span class="t " style="left:331.38px;top:853px;font-size:26px;line-height:30px;letter-spacing:0.000px;color:#000;transform:scaleY(1.045);transform-origin:0 24px;-webkit-text-stroke:0;">6.00</span>
<span class="t " style="left:483.67px;top:853px;font-size:26px;line-height:30px;letter-spacing:0.000px;color:#000;transform:scaleY(1.045);transform-origin:0 24px;-webkit-text-stroke:0;">11.50</span>
<span class="t " style="left:659.38px;top:853px;font-size:26px;line-height:30px;letter-spacing:0.000px;color:#000;transform:scaleY(1.045);transform-origin:0 24px;-webkit-text-stroke:0;">3.00</span>
<div class="rh" style="top:892px"></div>
<span class="t " style="left:69.06px;top:897px;font-size:26px;line-height:30px;letter-spacing:0.600px;color:#000;transform:scaleY(1.045);transform-origin:0 24px;-webkit-text-stroke:0;">16</span>
<span class="t " style="left:331.38px;top:897px;font-size:26px;line-height:30px;letter-spacing:0.000px;color:#000;transform:scaleY(1.045);transform-origin:0 24px;-webkit-text-stroke:0;">3.00</span>
<span class="t " style="left:496.17px;top:897px;font-size:26px;line-height:30px;letter-spacing:0.000px;color:#000;transform:scaleY(1.045);transform-origin:0 24px;-webkit-text-stroke:0;">9.00</span>
<span class="t " style="left:659.38px;top:897px;font-size:26px;line-height:30px;letter-spacing:0.000px;color:#000;transform:scaleY(1.045);transform-origin:0 24px;-webkit-text-stroke:0;">2.00</span>
<div class="rh" style="top:936px"></div>
<span class="t " style="left:69.06px;top:941px;font-size:26px;line-height:30px;letter-spacing:0.600px;color:#000;transform:scaleY(1.045);transform-origin:0 24px;-webkit-text-stroke:0;">17</span>
<span class="t " style="left:331.38px;top:941px;font-size:26px;line-height:30px;letter-spacing:0.000px;color:#000;transform:scaleY(1.045);transform-origin:0 24px;-webkit-text-stroke:0;">7.00</span>
<span class="t " style="left:496.17px;top:941px;font-size:26px;line-height:30px;letter-spacing:0.000px;color:#000;transform:scaleY(1.045);transform-origin:0 24px;-webkit-text-stroke:0;">9.50</span>
<span class="t " style="left:659.38px;top:941px;font-size:26px;line-height:30px;letter-spacing:0.000px;color:#000;transform:scaleY(1.045);transform-origin:0 24px;-webkit-text-stroke:0;">2.00</span>
<div class="rh" style="top:980px"></div>
<span class="t " style="left:69.06px;top:985px;font-size:26px;line-height:30px;letter-spacing:0.600px;color:#000;transform:scaleY(1.045);transform-origin:0 24px;-webkit-text-stroke:0;">18</span>
<span class="t " style="left:331.38px;top:985px;font-size:26px;line-height:30px;letter-spacing:0.000px;color:#000;transform:scaleY(1.045);transform-origin:0 24px;-webkit-text-stroke:0;">4.00</span>
<span class="t " style="left:496.17px;top:985px;font-size:26px;line-height:30px;letter-spacing:0.000px;color:#000;transform:scaleY(1.045);transform-origin:0 24px;-webkit-text-stroke:0;">9.00</span>
<span class="t " style="left:659.38px;top:985px;font-size:26px;line-height:30px;letter-spacing:0.000px;color:#000;transform:scaleY(1.045);transform-origin:0 24px;-webkit-text-stroke:0;">2.00</span>
<div class="rh" style="top:1024px"></div>
<span class="t " style="left:69.06px;top:1029px;font-size:26px;line-height:30px;letter-spacing:0.600px;color:#000;transform:scaleY(1.045);transform-origin:0 24px;-webkit-text-stroke:0;">19</span>
<span class="t " style="left:331.38px;top:1029px;font-size:26px;line-height:30px;letter-spacing:0.000px;color:#000;transform:scaleY(1.045);transform-origin:0 24px;-webkit-text-stroke:0;">6.00</span>
<span class="t " style="left:496.17px;top:1029px;font-size:26px;line-height:30px;letter-spacing:0.000px;color:#000;transform:scaleY(1.045);transform-origin:0 24px;-webkit-text-stroke:0;">9.50</span>
<span class="t " style="left:659.38px;top:1029px;font-size:26px;line-height:30px;letter-spacing:0.000px;color:#000;transform:scaleY(1.045);transform-origin:0 24px;-webkit-text-stroke:0;">2.00</span>
<div class="rh" style="top:1068px"></div>
<span class="t " style="left:69.06px;top:1073px;font-size:26px;line-height:30px;letter-spacing:0.600px;color:#000;transform:scaleY(1.045);transform-origin:0 24px;-webkit-text-stroke:0;">20</span>
<span class="t " style="left:331.38px;top:1073px;font-size:26px;line-height:30px;letter-spacing:0.000px;color:#000;transform:scaleY(1.045);transform-origin:0 24px;-webkit-text-stroke:0;">5.00</span>
<span class="t " style="left:496.17px;top:1073px;font-size:26px;line-height:30px;letter-spacing:0.000px;color:#000;transform:scaleY(1.045);transform-origin:0 24px;-webkit-text-stroke:0;">9.00</span>
<span class="t " style="left:659.38px;top:1073px;font-size:26px;line-height:30px;letter-spacing:0.000px;color:#000;transform:scaleY(1.045);transform-origin:0 24px;-webkit-text-stroke:0;">2.00</span>
<div class="rh" style="top:1112px"></div>
<span class="t " style="left:69.06px;top:1117px;font-size:26px;line-height:30px;letter-spacing:0.600px;color:#000;transform:scaleY(1.045);transform-origin:0 24px;-webkit-text-stroke:0;">21</span>
<span class="t " style="left:331.38px;top:1117px;font-size:26px;line-height:30px;letter-spacing:0.000px;color:#000;transform:scaleY(1.045);transform-origin:0 24px;-webkit-text-stroke:0;">4.50</span>
<span class="t " style="left:496.17px;top:1117px;font-size:26px;line-height:30px;letter-spacing:0.000px;color:#000;transform:scaleY(1.045);transform-origin:0 24px;-webkit-text-stroke:0;">9.00</span>
<span class="t " style="left:659.38px;top:1117px;font-size:26px;line-height:30px;letter-spacing:0.000px;color:#000;transform:scaleY(1.045);transform-origin:0 24px;-webkit-text-stroke:0;">2.00</span>
<div class="rh" style="top:1156px"></div>
<span class="t " style="left:69.06px;top:1161px;font-size:26px;line-height:30px;letter-spacing:0.600px;color:#000;transform:scaleY(1.045);transform-origin:0 24px;-webkit-text-stroke:0;">22</span>
<span class="t " style="left:331.38px;top:1161px;font-size:26px;line-height:30px;letter-spacing:0.000px;color:#000;transform:scaleY(1.045);transform-origin:0 24px;-webkit-text-stroke:0;">3.50</span>
<span class="t " style="left:496.17px;top:1161px;font-size:26px;line-height:30px;letter-spacing:0.000px;color:#000;transform:scaleY(1.045);transform-origin:0 24px;-webkit-text-stroke:0;">8.00</span>
<span class="t " style="left:659.38px;top:1161px;font-size:26px;line-height:30px;letter-spacing:0.000px;color:#000;transform:scaleY(1.045);transform-origin:0 24px;-webkit-text-stroke:0;">1.00</span>
<div class="rh" style="top:1200px"></div>
<span class="t " style="left:69.06px;top:1205px;font-size:26px;line-height:30px;letter-spacing:0.600px;color:#000;transform:scaleY(1.045);transform-origin:0 24px;-webkit-text-stroke:0;">23</span>
<span class="t " style="left:331.38px;top:1205px;font-size:26px;line-height:30px;letter-spacing:0.000px;color:#000;transform:scaleY(1.045);transform-origin:0 24px;-webkit-text-stroke:0;">6.50</span>
<span class="t " style="left:496.17px;top:1205px;font-size:26px;line-height:30px;letter-spacing:0.000px;color:#000;transform:scaleY(1.045);transform-origin:0 24px;-webkit-text-stroke:0;">9.50</span>
<span class="t " style="left:659.38px;top:1205px;font-size:26px;line-height:30px;letter-spacing:0.000px;color:#000;transform:scaleY(1.045);transform-origin:0 24px;-webkit-text-stroke:0;">2.00</span>
<div class="rh" style="top:1244px"></div>
<span class="t " style="left:69.06px;top:1249px;font-size:26px;line-height:30px;letter-spacing:0.600px;color:#000;transform:scaleY(1.045);transform-origin:0 24px;-webkit-text-stroke:0;">24</span>
<span class="t " style="left:331.38px;top:1249px;font-size:26px;line-height:30px;letter-spacing:0.000px;color:#000;transform:scaleY(1.045);transform-origin:0 24px;-webkit-text-stroke:0;">8.00</span>
<span class="t " style="left:481.67px;top:1249px;font-size:26px;line-height:30px;letter-spacing:0.000px;color:#000;transform:scaleY(1.045);transform-origin:0 24px;-webkit-text-stroke:0;">15.00</span>
<span class="t " style="left:659.38px;top:1249px;font-size:26px;line-height:30px;letter-spacing:0.000px;color:#000;transform:scaleY(1.045);transform-origin:0 24px;-webkit-text-stroke:0;">3.00</span>
<div class="rh" style="top:1288px"></div>
<span class="t " style="left:69.06px;top:1293px;font-size:26px;line-height:30px;letter-spacing:0.600px;color:#000;transform:scaleY(1.045);transform-origin:0 24px;-webkit-text-stroke:0;">25</span>
<span class="t " style="left:331.38px;top:1293px;font-size:26px;line-height:30px;letter-spacing:0.000px;color:#000;transform:scaleY(1.045);transform-origin:0 24px;-webkit-text-stroke:0;">5.00</span>
<span class="t " style="left:481.67px;top:1293px;font-size:26px;line-height:30px;letter-spacing:0.000px;color:#000;transform:scaleY(1.045);transform-origin:0 24px;-webkit-text-stroke:0;">10.50</span>
<span class="t " style="left:659.38px;top:1293px;font-size:26px;line-height:30px;letter-spacing:0.000px;color:#000;transform:scaleY(1.045);transform-origin:0 24px;-webkit-text-stroke:0;">2.00</span>
<div class="rh" style="top:1332px"></div>
<span class="t " style="left:69.06px;top:1337px;font-size:26px;line-height:30px;letter-spacing:0.600px;color:#7d8793;transform:scaleY(1.045);transform-origin:0 24px;-webkit-text-stroke:0;">26</span>
<div class="rh" style="top:1376px"></div>
<span class="t " style="left:69.06px;top:1381px;font-size:26px;line-height:30px;letter-spacing:0.600px;color:#7d8793;transform:scaleY(1.045);transform-origin:0 24px;-webkit-text-stroke:0;">27</span>
<div class="a" style="left:512px;top:46px;width:506px;height:1212px;background:#e1eefc;border:2px solid #0560bf;box-shadow:inset 0 0 0 4px #ecedfc"></div>
<svg width="0" height="0" class="a"><defs><linearGradient id="ag" x1="0" x2="0.7" y1="0" y2="1"><stop offset="0" stop-color="#141414"/><stop offset="0.3" stop-color="#3c3c3c"/><stop offset="0.6" stop-color="#7c7c7c"/><stop offset="1" stop-color="#a8a8a8"/></linearGradient></defs></svg>
<span class="t " style="left:568.40px;top:61px;font-size:24px;line-height:27px;letter-spacing:0.317px;color:#000;">Re<u>p</u>orts</span>
<svg class="a" style="left:972px;top:64px" width="10" height="18" viewBox="0 0 10 18"><path d="M0 0H2V2H4V4H6V6H8V8H10V10H8V12H6V14H4V16H2V18H0Z" fill="url(#ag)"/></svg>
<span class="t " style="left:568.40px;top:107px;font-size:24px;line-height:27px;letter-spacing:0.206px;color:#000;">D<u>e</u>scriptive Statistics</span>
<svg class="a" style="left:972px;top:110px" width="10" height="18" viewBox="0 0 10 18"><path d="M0 0H2V2H4V4H6V6H8V8H10V10H8V12H6V14H4V16H2V18H0Z" fill="url(#ag)"/></svg>
<span class="t " style="left:568.40px;top:153px;font-size:24px;line-height:27px;letter-spacing:0.251px;color:#000;"><u>B</u>ayesian Statistics</span>
<svg class="a" style="left:972px;top:156px" width="10" height="18" viewBox="0 0 10 18"><path d="M0 0H2V2H4V4H6V6H8V8H10V10H8V12H6V14H4V16H2V18H0Z" fill="url(#ag)"/></svg>
<span class="t " style="left:568.40px;top:199px;font-size:24px;line-height:27px;letter-spacing:0.885px;color:#000;">Ta<u>b</u>les</span>
<svg class="a" style="left:972px;top:202px" width="10" height="18" viewBox="0 0 10 18"><path d="M0 0H2V2H4V4H6V6H8V8H10V10H8V12H6V14H4V16H2V18H0Z" fill="url(#ag)"/></svg>
<span class="t " style="left:568.40px;top:245px;font-size:24px;line-height:27px;letter-spacing:0.352px;color:#000;">Co<u>m</u>pare Means</span>
<svg class="a" style="left:972px;top:248px" width="10" height="18" viewBox="0 0 10 18"><path d="M0 0H2V2H4V4H6V6H8V8H10V10H8V12H6V14H4V16H2V18H0Z" fill="url(#ag)"/></svg>
<span class="t " style="left:568.40px;top:291px;font-size:24px;line-height:27px;letter-spacing:0.171px;color:#000;"><u>G</u>eneral Linear Model</span>
<svg class="a" style="left:972px;top:294px" width="10" height="18" viewBox="0 0 10 18"><path d="M0 0H2V2H4V4H6V6H8V8H10V10H8V12H6V14H4V16H2V18H0Z" fill="url(#ag)"/></svg>
<span class="t " style="left:568.40px;top:337px;font-size:24px;line-height:27px;letter-spacing:0.205px;color:#000;">Generali<u>z</u>ed Linear Models</span>
<svg class="a" style="left:972px;top:340px" width="10" height="18" viewBox="0 0 10 18"><path d="M0 0H2V2H4V4H6V6H8V8H10V10H8V12H6V14H4V16H2V18H0Z" fill="url(#ag)"/></svg>
<span class="t " style="left:568.40px;top:383px;font-size:24px;line-height:27px;letter-spacing:-0.191px;color:#000;">Mi<u>x</u>ed Models</span>
<svg class="a" style="left:972px;top:386px" width="10" height="18" viewBox="0 0 10 18"><path d="M0 0H2V2H4V4H6V6H8V8H10V10H8V12H6V14H4V16H2V18H0Z" fill="url(#ag)"/></svg>
<span class="t " style="left:568.40px;top:429px;font-size:24px;line-height:27px;letter-spacing:0.181px;color:#000;"><u>C</u>orrelate</span>
<svg class="a" style="left:972px;top:432px" width="10" height="18" viewBox="0 0 10 18"><path d="M0 0H2V2H4V4H6V6H8V8H10V10H8V12H6V14H4V16H2V18H0Z" fill="url(#ag)"/></svg>
<div class="a" style="left:518px;top:466px;width:498px;height:46px;background:linear-gradient(180deg,#fed636 0%,#fedb58 30%,#fee48a 65%,#feecb0 100%)"></div>
<span class="t " style="left:568.40px;top:475px;font-size:24px;line-height:27px;letter-spacing:0.769px;color:#000;"><u>R</u>egression</span>
<svg class="a" style="left:972px;top:478px" width="10" height="18" viewBox="0 0 10 18"><path d="M0 0H2V2H4V4H6V6H8V8H10V10H8V12H6V14H4V16H2V18H0Z" fill="url(#ag)"/></svg>
<span class="t " style="left:568.40px;top:521px;font-size:24px;line-height:27px;letter-spacing:0.544px;color:#000;">L<u>o</u>glinear</span>
<svg class="a" style="left:972px;top:524px" width="10" height="18" viewBox="0 0 10 18"><path d="M0 0H2V2H4V4H6V6H8V8H10V10H8V12H6V14H4V16H2V18H0Z" fill="url(#ag)"/></svg>
<span class="t " style="left:568.40px;top:567px;font-size:24px;line-height:27px;letter-spacing:0.302px;color:#000;">Neural Net<u>w</u>orks</span>
<svg class="a" style="left:972px;top:570px" width="10" height="18" viewBox="0 0 10 18"><path d="M0 0H2V2H4V4H6V6H8V8H10V10H8V12H6V14H4V16H2V18H0Z" fill="url(#ag)"/></svg>
<span class="t " style="left:568.40px;top:613px;font-size:24px;line-height:27px;letter-spacing:0.543px;color:#000;">Classif<u>y</u></span>
<svg class="a" style="left:972px;top:616px" width="10" height="18" viewBox="0 0 10 18"><path d="M0 0H2V2H4V4H6V6H8V8H10V10H8V12H6V14H4V16H2V18H0Z" fill="url(#ag)"/></svg>
<span class="t " style="left:568.40px;top:659px;font-size:24px;line-height:27px;letter-spacing:0.576px;color:#000;"><u>D</u>imension Reduction</span>
<svg class="a" style="left:972px;top:662px" width="10" height="18" viewBox="0 0 10 18"><path d="M0 0H2V2H4V4H6V6H8V8H10V10H8V12H6V14H4V16H2V18H0Z" fill="url(#ag)"/></svg>
<span class="t " style="left:568.40px;top:705px;font-size:24px;line-height:27px;letter-spacing:0.075px;color:#000;">Sc<u>a</u>le</span>
<svg class="a" style="left:972px;top:708px" width="10" height="18" viewBox="0 0 10 18"><path d="M0 0H2V2H4V4H6V6H8V8H10V10H8V12H6V14H4V16H2V18H0Z" fill="url(#ag)"/></svg>
<span class="t " style="left:568.40px;top:751px;font-size:24px;line-height:27px;letter-spacing:0.565px;color:#000;"><u>N</u>onparametric Tests</span>
<svg class="a" style="left:972px;top:754px" width="10" height="18" viewBox="0 0 10 18"><path d="M0 0H2V2H4V4H6V6H8V8H10V10H8V12H6V14H4V16H2V18H0Z" fill="url(#ag)"/></svg>
<span class="t " style="left:568.40px;top:797px;font-size:24px;line-height:27px;letter-spacing:0.362px;color:#000;">Forecas<u>t</u>ing</span>
<svg class="a" style="left:972px;top:800px" width="10" height="18" viewBox="0 0 10 18"><path d="M0 0H2V2H4V4H6V6H8V8H10V10H8V12H6V14H4V16H2V18H0Z" fill="url(#ag)"/></svg>
<span class="t " style="left:568.40px;top:843px;font-size:24px;line-height:27px;letter-spacing:-0.468px;color:#000;"><u>S</u>urvival</span>
<svg class="a" style="left:972px;top:846px" width="10" height="18" viewBox="0 0 10 18"><path d="M0 0H2V2H4V4H6V6H8V8H10V10H8V12H6V14H4V16H2V18H0Z" fill="url(#ag)"/></svg>
<span class="t " style="left:568.40px;top:889px;font-size:24px;line-height:27px;letter-spacing:0.425px;color:#000;">M<u>u</u>ltiple Response</span>
<svg class="a" style="left:972px;top:892px" width="10" height="18" viewBox="0 0 10 18"><path d="M0 0H2V2H4V4H6V6H8V8H10V10H8V12H6V14H4V16H2V18H0Z" fill="url(#ag)"/></svg>
<span class="t " style="left:565.00px;top:937px;font-size:24px;line-height:27px;letter-spacing:0.209px;color:#000;">Missing Value Anal<u>y</u>sis...</span>
<svg class="a" style="left:524px;top:936px" width="32" height="30" viewBox="0 0 32 30"><rect width="32" height="30" fill="#0f4aa8"/><rect x="2" y="2" width="13" height="12" fill="#8cb2e2"/><rect x="17" y="2" width="13" height="12" fill="#fdfcae"/><rect x="2" y="16" width="13" height="12" fill="#2f9cda"/><rect x="17" y="16" width="13" height="12" fill="#2f9cda"/><rect x="14.5" y="2" width="2.5" height="26" fill="#8fd02a"/><rect x="2" y="14" width="28" height="2.5" fill="#8fd02a"/><path d="M3 8 L6 8 L8 11 L13 3 L15 3 L15 5 L9 14 L7 14 Z" fill="#e84a1c"/><path d="M3 20 L6 20 L8 23 L12 17 L15 17 L9 27 L7 27 Z" fill="#e84a1c"/><path d="M18 20 L21 20 L23 23 L27 17 L30 17 L24 27 L22 27 Z" fill="#e84a1c"/><text x="23.5" y="13" text-anchor="middle" font-family="Liberation Sans,sans-serif" font-weight="bold" font-size="13" fill="#a83cb4">?</text></svg>
<span class="t " style="left:568.40px;top:985px;font-size:24px;line-height:27px;letter-spacing:0.146px;color:#000;">Mul<u>t</u>iple Imputation</span>
<svg class="a" style="left:972px;top:988px" width="10" height="18" viewBox="0 0 10 18"><path d="M0 0H2V2H4V4H6V6H8V8H10V10H8V12H6V14H4V16H2V18H0Z" fill="url(#ag)"/></svg>
<span class="t " style="left:568.40px;top:1031px;font-size:24px;line-height:27px;letter-spacing:0.504px;color:#000;">Comp<u>l</u>ex Samples</span>
<svg class="a" style="left:972px;top:1034px" width="10" height="18" viewBox="0 0 10 18"><path d="M0 0H2V2H4V4H6V6H8V8H10V10H8V12H6V14H4V16H2V18H0Z" fill="url(#ag)"/></svg>
<span class="t " style="left:565.00px;top:1079px;font-size:24px;line-height:27px;letter-spacing:0.167px;color:#000;">S<u>i</u>mulation...</span>
<svg class="a" style="left:524px;top:1076px" width="34" height="34" viewBox="0 0 34 34"><rect x="1.0" y="2.0" width="7.4" height="5.6" fill="#5aa6ec" stroke="#1f6fd2" stroke-width="1.4"/><rect x="9.4" y="2.0" width="7.4" height="5.6" fill="#5aa6ec" stroke="#1f6fd2" stroke-width="1.4"/><rect x="17.8" y="2.0" width="7.4" height="5.6" fill="#5aa6ec" stroke="#1f6fd2" stroke-width="1.4"/><rect x="1.0" y="8.6" width="7.4" height="5.6" fill="#eef5fd" stroke="#1f6fd2" stroke-width="1.4"/><rect x="9.4" y="8.6" width="7.4" height="5.6" fill="#eef5fd" stroke="#1f6fd2" stroke-width="1.4"/><rect x="17.8" y="8.6" width="7.4" height="5.6" fill="#eef5fd" stroke="#1f6fd2" stroke-width="1.4"/><rect x="1.0" y="15.2" width="7.4" height="5.6" fill="#eef5fd" stroke="#1f6fd2" stroke-width="1.4"/><rect x="9.4" y="15.2" width="7.4" height="5.6" fill="#eef5fd" stroke="#1f6fd2" stroke-width="1.4"/><rect x="17.8" y="15.2" width="7.4" height="5.6" fill="#eef5fd" stroke="#1f6fd2" stroke-width="1.4"/><rect x="1.0" y="21.8" width="7.4" height="5.6" fill="#eef5fd" stroke="#1f6fd2" stroke-width="1.4"/><rect x="9.4" y="21.8" width="7.4" height="5.6" fill="#eef5fd" stroke="#1f6fd2" stroke-width="1.4"/><rect x="17.8" y="21.8" width="7.4" height="5.6" fill="#eef5fd" stroke="#1f6fd2" stroke-width="1.4"/><rect x="10.5" y="14" width="21.5" height="17.5" fill="#f4f9ff" stroke="#1f6fd2" stroke-width="1.6"/><path d="M15 19 H27 V21 H22 V23 H26 V25 H22 V29 H20 V25 H18 V23 H20 V21 H15 Z" fill="#1858c0"/></svg>
<span class="t " style="left:568.40px;top:1127px;font-size:24px;line-height:27px;letter-spacing:-0.011px;color:#000;"><u>Q</u>uality Control</span>
<svg class="a" style="left:972px;top:1130px" width="10" height="18" viewBox="0 0 10 18"><path d="M0 0H2V2H4V4H6V6H8V8H10V10H8V12H6V14H4V16H2V18H0Z" fill="url(#ag)"/></svg>
<span class="t " style="left:568.40px;top:1173px;font-size:24px;line-height:27px;letter-spacing:0.293px;color:#000;"><u>S</u>patial and Temporal Modeling...</span>
<svg class="a" style="left:972px;top:1176px" width="10" height="18" viewBox="0 0 10 18"><path d="M0 0H2V2H4V4H6V6H8V8H10V10H8V12H6V14H4V16H2V18H0Z" fill="url(#ag)"/></svg>
<span class="t " style="left:568.40px;top:1219px;font-size:24px;line-height:27px;letter-spacing:0.037px;color:#000;">Direct Mar<u>k</u>eting</span>
<svg class="a" style="left:972px;top:1222px" width="10" height="18" viewBox="0 0 10 18"><path d="M0 0H2V2H4V4H6V6H8V8H10V10H8V12H6V14H4V16H2V18H0Z" fill="url(#ag)"/></svg>
<div class="a" style="left:1016px;top:466px;width:494px;height:716px;background:#e1eefc;border:2px solid #0560bf;box-shadow:inset 0 0 0 4px #ecedfc"></div>
<div class="a" style="left:1022px;top:622px;width:486px;height:50px;background:linear-gradient(180deg,#fed636 0%,#fedb58 30%,#fee48a 65%,#feecb0 100%)"></div>
<span class="t " style="left:1067.90px;top:483px;font-size:24px;line-height:27px;letter-spacing:0.084px;color:#000;"><u>A</u>utomatic Linear Modeling...</span>
<svg class="a" style="left:1028px;top:480px" width="32" height="32" viewBox="0 0 32 32"><rect width="32" height="32" fill="#0c3d9e"/><rect x="2" y="2" width="28" height="12" fill="#7ea4d8"/><rect x="2" y="14" width="28" height="16" fill="#2a98d6"/><path d="M8 22.5 L30 8.5 L30 14 L8 28 Z" fill="#ffcc10"/><path d="M4 2 H8 V26 H30 V30 H4 Z" fill="#fff"/><rect x="2" y="26" width="2" height="4" fill="#30b8f0"/></svg>
<span class="t " style="left:1067.90px;top:533px;font-size:24px;line-height:27px;letter-spacing:0.178px;color:#000;"><u>L</u>inear...</span>
<svg class="a" style="left:1028px;top:530px" width="32" height="32" viewBox="0 0 32 32"><rect x="0" y="0" width="32" height="32" fill="#3877c0"/><rect x="2" y="2" width="28" height="13" fill="#7aa2da"/><rect x="2" y="2" width="28" height="2" fill="#93b4e2"/><rect x="2" y="15" width="28" height="11" fill="#2a98d8"/><rect x="2" y="26" width="28" height="4" fill="#32aae8"/><text x="16.2" y="15.8" text-anchor="middle" font-family="Liberation Sans,sans-serif" font-weight="bold" font-size="17.5" fill="#fff" stroke="#fff" stroke-width="0.2">R</text><text x="16" y="30" text-anchor="middle" font-family="Liberation Sans,sans-serif" font-weight="bold" font-size="14.5" fill="#f8f020" stroke="#f8f020" stroke-width="0.3" textLength="24" lengthAdjust="spacingAndGlyphs">LIN</text></svg>
<span class="t " style="left:1067.90px;top:583px;font-size:24px;line-height:27px;letter-spacing:0.108px;color:#000;"><u>C</u>urve Estimation...</span>
<svg class="a" style="left:1028px;top:582px" width="32" height="30" preserveAspectRatio="none" viewBox="0 0 32 32"><rect width="32" height="32" fill="#0c3d9e"/><rect x="2" y="2" width="28" height="12" fill="#7ea4d8"/><rect x="2" y="14" width="28" height="16" fill="#2a98d6"/><path d="M3 29 V24 H6 V22 H9 V20 H12 V18 H15 V14 H17 V10 H20 V8 H23 V2 H26 V11 H23 V13 H20 V17 H18 V21 H15 V23 H12 V25 H9 V27 H6 V29 Z" fill="#e0142e"/></svg>
<span class="t " style="left:1067.90px;top:633px;font-size:24px;line-height:27px;letter-spacing:-0.051px;color:#000;">PROCESS v5.0 by Andrew F. Hayes</span>
<span class="t " style="left:1067.90px;top:683px;font-size:24px;line-height:27px;letter-spacing:0.243px;color:#000;">Partial Lea<u>s</u>t Squares...</span>
<svg class="a" style="left:1028px;top:680px" width="32" height="32" viewBox="0 0 32 32"><rect x="0" y="0" width="32" height="32" fill="#0c3d9e"/><rect x="2" y="2" width="28" height="13" fill="#7aa2da"/><rect x="2" y="2" width="28" height="2" fill="#93b4e2"/><rect x="2" y="15" width="28" height="11" fill="#2a98d8"/><rect x="2" y="26" width="28" height="4" fill="#32aae8"/><text x="16.2" y="15.8" text-anchor="middle" font-family="Liberation Sans,sans-serif" font-weight="bold" font-size="17.5" fill="#fff" stroke="#fff" stroke-width="0.2">R</text><text x="16" y="30" text-anchor="middle" font-family="Liberation Sans,sans-serif" font-weight="bold" font-size="14.5" fill="#f8f020" stroke="#f8f020" stroke-width="0.3" textLength="24" lengthAdjust="spacingAndGlyphs">PLS</text></svg>
<span class="t " style="left:1067.90px;top:735px;font-size:24px;line-height:27px;letter-spacing:0.028px;color:#000;">Binary Lo<u>g</u>istic...</span>
<svg class="a" style="left:1028px;top:734px" width="32" height="30" preserveAspectRatio="none" viewBox="0 0 32 32"><rect x="0" y="0" width="32" height="32" fill="#0c3d9e"/><rect x="2" y="2" width="28" height="13" fill="#7aa2da"/><rect x="2" y="2" width="28" height="2" fill="#93b4e2"/><rect x="2" y="15" width="28" height="11" fill="#2a98d8"/><rect x="2" y="26" width="28" height="4" fill="#32aae8"/><text x="16.2" y="15.8" text-anchor="middle" font-family="Liberation Sans,sans-serif" font-weight="bold" font-size="17.5" fill="#fff" stroke="#fff" stroke-width="0.2">R</text><text x="16" y="30" text-anchor="middle" font-family="Liberation Sans,sans-serif" font-weight="bold" font-size="14.5" fill="#f8f020" stroke="#f8f020" stroke-width="0.3" textLength="24" lengthAdjust="spacingAndGlyphs">LOG</text></svg>
<span class="t " style="left:1067.90px;top:785px;font-size:24px;line-height:27px;letter-spacing:0.233px;color:#000;"><u>M</u>ultinomial Logistic...</span>
<svg class="a" style="left:1028px;top:782px" width="32" height="32" viewBox="0 0 32 32"><rect x="0" y="0" width="32" height="32" fill="#3877c0"/><rect x="2" y="2" width="28" height="13" fill="#7aa2da"/><rect x="2" y="2" width="28" height="2" fill="#93b4e2"/><rect x="2" y="15" width="28" height="11" fill="#2a98d8"/><rect x="2" y="26" width="28" height="4" fill="#32aae8"/><text x="16.2" y="17" text-anchor="middle" font-family="Liberation Sans,sans-serif" font-weight="bold" font-size="17.5" fill="#fff" stroke="#fff" stroke-width="0.2">R</text><text x="16" y="30" text-anchor="middle" font-family="Liberation Sans,sans-serif" font-weight="bold" font-size="11.5" fill="#f8f020" stroke="#f8f020" stroke-width="0.3" textLength="26.5" lengthAdjust="spacingAndGlyphs">MULT</text></svg>
<span class="t " style="left:1067.90px;top:835px;font-size:24px;line-height:27px;letter-spacing:-0.075px;color:#000;">Or<u>d</u>inal...</span>
<svg class="a" style="left:1028px;top:832px" width="32" height="32" viewBox="0 0 32 32"><rect x="0" y="0" width="32" height="32" fill="#0c3d9e"/><rect x="2" y="2" width="28" height="13" fill="#7aa2da"/><rect x="2" y="2" width="28" height="2" fill="#93b4e2"/><rect x="2" y="15" width="28" height="11" fill="#2a98d8"/><rect x="2" y="26" width="28" height="4" fill="#32aae8"/><text x="16.2" y="15.8" text-anchor="middle" font-family="Liberation Sans,sans-serif" font-weight="bold" font-size="17.5" fill="#fff" stroke="#fff" stroke-width="0.2">R</text><text x="16" y="30" text-anchor="middle" font-family="Liberation Sans,sans-serif" font-weight="bold" font-size="14.5" fill="#f8f020" stroke="#f8f020" stroke-width="0.3" textLength="24" lengthAdjust="spacingAndGlyphs">ORD</text></svg>
<span class="t " style="left:1067.90px;top:885px;font-size:24px;line-height:27px;letter-spacing:-0.281px;color:#000;"><u>P</u>robit...</span>
<svg class="a" style="left:1028px;top:882px" width="32" height="32" viewBox="0 0 32 32"><rect x="0" y="0" width="32" height="32" fill="#3877c0"/><rect x="2" y="2" width="28" height="13" fill="#7aa2da"/><rect x="2" y="2" width="28" height="2" fill="#93b4e2"/><rect x="2" y="15" width="28" height="11" fill="#2a98d8"/><rect x="2" y="26" width="28" height="4" fill="#32aae8"/><text x="16.2" y="17" text-anchor="middle" font-family="Liberation Sans,sans-serif" font-weight="bold" font-size="17.5" fill="#fff" stroke="#fff" stroke-width="0.2">R</text><text x="16" y="30" text-anchor="middle" font-family="Liberation Sans,sans-serif" font-weight="bold" font-size="11.5" fill="#f8f020" stroke="#f8f020" stroke-width="0.3" textLength="26.5" lengthAdjust="spacingAndGlyphs">PROB</text></svg>
<span class="t " style="left:1067.90px;top:937px;font-size:24px;line-height:27px;letter-spacing:0.320px;color:#000;"><u>N</u>onlinear...</span>
<svg class="a" style="left:1028px;top:934px" width="32" height="32" viewBox="0 0 32 32"><rect x="0" y="0" width="32" height="32" fill="#0c3d9e"/><rect x="2" y="2" width="28" height="13" fill="#7aa2da"/><rect x="2" y="2" width="28" height="2" fill="#93b4e2"/><rect x="2" y="15" width="28" height="11" fill="#2a98d8"/><rect x="2" y="26" width="28" height="4" fill="#32aae8"/><text x="16.2" y="15.8" text-anchor="middle" font-family="Liberation Sans,sans-serif" font-weight="bold" font-size="17.5" fill="#fff" stroke="#fff" stroke-width="0.2">R</text><text x="16" y="30" text-anchor="middle" font-family="Liberation Sans,sans-serif" font-weight="bold" font-size="14.5" fill="#f8f020" stroke="#f8f020" stroke-width="0.3" textLength="24" lengthAdjust="spacingAndGlyphs">NLR</text></svg>
<span class="t " style="left:1067.90px;top:987px;font-size:24px;line-height:27px;letter-spacing:0.211px;color:#000;"><u>W</u>eight Estimation...</span>
<svg class="a" style="left:1028px;top:986px" width="32" height="30" preserveAspectRatio="none" viewBox="0 0 32 32"><rect x="0" y="0" width="32" height="32" fill="#0c3d9e"/><rect x="2" y="2" width="28" height="13" fill="#7aa2da"/><rect x="2" y="2" width="28" height="2" fill="#93b4e2"/><rect x="2" y="15" width="28" height="11" fill="#2a98d8"/><rect x="2" y="26" width="28" height="4" fill="#32aae8"/><text x="16.2" y="15.8" text-anchor="middle" font-family="Liberation Sans,sans-serif" font-weight="bold" font-size="17.5" fill="#fff" stroke="#fff" stroke-width="0.2">R</text><text x="16" y="30" text-anchor="middle" font-family="Liberation Sans,sans-serif" font-weight="bold" font-size="14.5" fill="#f8f020" stroke="#f8f020" stroke-width="0.3" textLength="24" lengthAdjust="spacingAndGlyphs">WLS</text></svg>
<span class="t " style="left:1067.90px;top:1037px;font-size:24px;line-height:27px;letter-spacing:0.239px;color:#000;"><u>2</u>-Stage Least Squares...</span>
<svg class="a" style="left:1028px;top:1034px" width="32" height="32" viewBox="0 0 32 32"><rect x="0" y="0" width="32" height="32" fill="#0c3d9e"/><rect x="2" y="2" width="28" height="13" fill="#7aa2da"/><rect x="2" y="2" width="28" height="2" fill="#93b4e2"/><rect x="2" y="15" width="28" height="11" fill="#2a98d8"/><rect x="2" y="26" width="28" height="4" fill="#32aae8"/><text x="16.2" y="17" text-anchor="middle" font-family="Liberation Sans,sans-serif" font-weight="bold" font-size="17.5" fill="#fff" stroke="#fff" stroke-width="0.2">R</text><text x="16" y="30" text-anchor="middle" font-family="Liberation Sans,sans-serif" font-weight="bold" font-size="11.5" fill="#f8f020" stroke="#f8f020" stroke-width="0.3" textLength="26.5" lengthAdjust="spacingAndGlyphs">2SLS</text></svg>
<span class="t " style="left:1067.90px;top:1089px;font-size:24px;line-height:27px;letter-spacing:-0.078px;color:#000;"><u>Q</u>uantile...</span>
<svg class="a" style="left:1028px;top:1086px" width="32" height="32" viewBox="0 0 32 32"><rect x="0" y="0" width="32" height="32" fill="#3877c0"/><rect x="2" y="2" width="28" height="13" fill="#7aa2da"/><rect x="2" y="2" width="28" height="2" fill="#93b4e2"/><rect x="2" y="15" width="28" height="11" fill="#2a98d8"/><rect x="2" y="26" width="28" height="4" fill="#32aae8"/><text x="16.2" y="17" text-anchor="middle" font-family="Liberation Sans,sans-serif" font-weight="bold" font-size="17.5" fill="#fff" stroke="#fff" stroke-width="0.2">R</text><text x="16" y="30" text-anchor="middle" font-family="Liberation Sans,sans-serif" font-weight="bold" font-size="11.5" fill="#f8f020" stroke="#f8f020" stroke-width="0.3" textLength="26.5" lengthAdjust="spacingAndGlyphs">QUAN</text></svg>
<span class="t " style="left:1067.90px;top:1141px;font-size:24px;line-height:27px;letter-spacing:0.065px;color:#000;"><u>O</u>ptimal Scaling (CATREG)...</span>
<div class="a" style="left:1022px;top:722px;width:486px;height:2px;background:#b9b9b9"></div>
<div class="a" style="left:1022px;top:924px;width:486px;height:2px;background:#b9b9b9"></div>
<div class="a" style="left:1022px;top:1076px;width:486px;height:2px;background:#b9b9b9"></div>
<div class="a" style="left:1022px;top:1128px;width:486px;height:2px;background:#b9b9b9"></div>
<svg class="a" style="left:1466px;top:638px" width="40" height="50" viewBox="1466 638 40 50"><path d="M1472.8 645.2 L1472.8 676.7 L1480.1 669.7 L1485.6 681.2 L1489.4 679 L1484.5 668.1 L1495.3 668.1 Z" fill="#fff" stroke="#000" stroke-width="1.15" stroke-linejoin="miter"/></svg>
</body></html>
